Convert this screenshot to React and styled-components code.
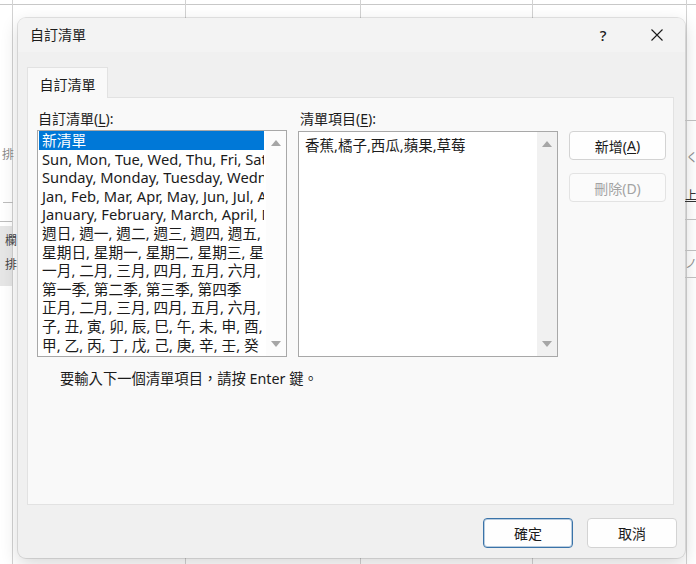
import React from "react";
import styled, { createGlobalStyle } from "styled-components";

const UI_FONT = `"Segoe UI", "Noto Sans", "Noto Sans CJK TC", sans-serif`;

const GlobalStyle = createGlobalStyle`
  html, body {
    margin: 0;
    padding: 0;
  }
  body {
    width: 696px;
    height: 564px;
    overflow: hidden;
    font-family: ${UI_FONT};
    color: #1b1b1b;
  }
`;

// spreadsheet showing behind the dialog
const Sheet = styled.div`
  width: 696px;
  height: 564px;
  display: grid;
  grid-template-columns: 18px 667px 11px;
  grid-template-rows: 18px 540px 6px;
  background-color: #fff;
  background-image:
    linear-gradient(#d2d2d2, #d2d2d2),
    linear-gradient(#d2d2d2, #d2d2d2),
    linear-gradient(#d2d2d2, #d2d2d2),
    linear-gradient(#d2d2d2, #d2d2d2),
    linear-gradient(#d2d2d2, #d2d2d2),
    linear-gradient(#c8c8c8, #c8c8c8);
  background-size: 1px 100%, 1px 100%, 1px 100%, 1px 100%, 1px 100%, 100% 1px;
  background-position: 12px 0, 185px 0, 360px 0, 532px 0, 686px 0, 0 4px;
  background-repeat: no-repeat;
`;

const SideStrip = styled.div`
  grid-row: 2;
  grid-column: ${(p) => p.col};
  display: flex;
  flex-direction: column;
  overflow: hidden;
  font-size: 12px;
  line-height: 14px;
`;

const Gap = styled.div`
  height: ${(p) => p.h}px;
  flex: none;
`;

const Frag = styled.div`
  flex: none;
  padding-left: ${(p) => p.indent || 0}px;
  color: ${(p) => p.color || "#8a8a8a"};
  text-decoration: ${(p) => (p.underline ? "underline" : "none")};
  white-space: nowrap;
`;

const Rule = styled.div`
  flex: none;
  height: 1px;
  margin-left: ${(p) => p.indent || 0}px;
  width: ${(p) => p.w || 11}px;
  background: #bdbdbd;
`;

const GrayBlock = styled.div`
  flex: none;
  height: 60px;
  width: 12px;
  background: #e6e6e6;
  display: flex;
  flex-direction: column;
  gap: 10px;
  padding-top: 8px;
  box-sizing: border-box;
  font-size: 12px;
  line-height: 14px;
  color: #444;
  padding-left: 5px;
`;

const Dialog = styled.div`
  grid-row: 2;
  grid-column: 2;
  display: flex;
  flex-direction: column;
  background: #f0f0f0;
  border-radius: 8px;
  box-shadow: 0 0 0 1px rgba(0, 0, 0, 0.1), 0 6px 18px rgba(0, 0, 0, 0.16);
  overflow: hidden;
`;

const TitleBar = styled.div`
  height: 34px;
  display: flex;
  align-items: center;
  padding-left: 12px;
  background: #f3f3f3;
  flex: none;
`;

const Title = styled.div`
  font-size: 14px;
  line-height: 18px;
`;

const TitleButtons = styled.div`
  margin-left: auto;
  display: flex;
  gap: 8px;
  padding-right: 5px;
`;

const CaptionButton = styled.div`
  width: 46px;
  height: 30px;
  display: flex;
  align-items: center;
  justify-content: center;
  font-size: 15px;
  font-weight: 500;
  color: #1b1b1b;
`;

const TabArea = styled.div`
  padding: 15px 11px 0 9px;
  display: flex;
  flex-direction: column;
`;

const TabStrip = styled.div`
  display: flex;
  height: 30px;
`;

const Tab = styled.div`
  width: 81px;
  box-sizing: border-box;
  background: #f9f9f9;
  border: 1px solid #e2e2e2;
  border-bottom: none;
  margin-bottom: -1px;
  position: relative;
  z-index: 1;
  display: flex;
  align-items: center;
  justify-content: center;
  font-size: 14px;
  padding-top: 1px;
`;

const Panel = styled.div`
  height: 408px;
  box-sizing: border-box;
  background: #f9f9f9;
  border: 1px solid #e2e2e2;
  padding: 12px 0 0 9px;
`;

const Columns = styled.div`
  display: grid;
  grid-template-columns: 250px 260px 97px;
  grid-template-rows: auto 227px;
  column-gap: 11px;
`;

const Label = styled.div`
  font-size: 14px;
  line-height: 18px;
  margin-bottom: 2px;
  padding-left: ${(p) => p.indent || 0}px;
`;

const Key = styled.span`
  text-decoration: underline;
  text-underline-offset: 2px;
`;

const ListBox = styled.div`
  display: flex;
  background: #fff;
  border: 1px solid #a8a8a8;
  margin-top: ${(p) => p.offset || 0}px;
  height: ${(p) => 227 - (p.offset || 0)}px;
  box-sizing: border-box;
  overflow: hidden;
`;

const Items = styled.div`
  flex: 1;
  min-width: 0;
  overflow: hidden;
  padding: 0 2px 0 1px;
`;

const Item = styled.div`
  height: 18.6px;
  line-height: 18.6px;
  font-size: 14.7px;
  padding-left: 3px;
  white-space: nowrap;
  overflow: hidden;
  background: ${(p) => (p.selected ? "#0078d7" : "transparent")};
  color: ${(p) => (p.selected ? "#fff" : "#1b1b1b")};
`;

const Entry = styled.div`
  flex: 1;
  padding: 3px 6px;
  font-size: 14.5px;
  line-height: 20px;
  white-space: nowrap;
`;

const ScrollTrack = styled.div`
  width: 20px;
  flex: none;
  display: flex;
  flex-direction: column;
  justify-content: space-between;
  background: ${(p) => p.bg};
`;

const ArrowBox = styled.div`
  height: 24px;
  display: flex;
  align-items: center;
  justify-content: center;
`;

const ButtonColumn = styled.div`
  display: flex;
  flex-direction: column;
  gap: 13px;
  padding-top: 1px;
`;

const Button = styled.div`
  height: ${(p) => p.h || 29}px;
  width: ${(p) => p.w || 97}px;
  box-sizing: border-box;
  border-radius: 4px;
  display: flex;
  align-items: center;
  justify-content: center;
  font-size: 14px;
  background: ${(p) => (p.disabled ? "#fbfbfb" : "#fefefe")};
  color: ${(p) => (p.disabled ? "#a3a3a3" : "#1b1b1b")};
  border: 1px solid
    ${(p) => (p.primary ? "#3a73a8" : p.disabled ? "#e3e3e3" : "#d3d3d3")};
  box-shadow: ${(p) =>
    p.primary ? "inset 0 0 0 1px rgba(58, 115, 168, 0.35)" : "none"};
`;

const Hint = styled.div`
  margin-top: 13px;
  padding-left: 23px;
  font-size: 14.3px;
  line-height: 18px;
`;

const Footer = styled.div`
  flex: 1;
  display: flex;
  justify-content: flex-end;
  align-items: flex-start;
  gap: 14px;
  padding: 13px 8px 0 0;
`;

const Arrow = ({ down }) => (
  <svg width="10" height="6" viewBox="0 0 10 6">
    <polygon
      points={down ? "0,0 10,0 5,6" : "0,6 10,6 5,0"}
      fill="#a6a6a6"
    />
  </svg>
);

const CloseGlyph = () => (
  <svg width="12" height="12" viewBox="0 0 12 12">
    <path d="M0.5 0.5 L11.5 11.5 M11.5 0.5 L0.5 11.5" stroke="#1b1b1b" strokeWidth="1.1" fill="none" />
  </svg>
);

const presetLists = [
  "新清單",
  "Sun, Mon, Tue, Wed, Thu, Fri, Sat",
  "Sunday, Monday, Tuesday, Wednesday, Thursday, Friday, Saturday",
  "Jan, Feb, Mar, Apr, May, Jun, Jul, Aug, Sep, Oct, Nov, Dec",
  "January, February, March, April, May, June, July",
  "週日, 週一, 週二, 週三, 週四, 週五, 週六",
  "星期日, 星期一, 星期二, 星期三, 星期四, 星期五, 星期六",
  "一月, 二月, 三月, 四月, 五月, 六月, 七月, 八月",
  "第一季, 第二季, 第三季, 第四季",
  "正月, 二月, 三月, 四月, 五月, 六月, 七月, 八月",
  "子, 丑, 寅, 卯, 辰, 巳, 午, 未, 申, 酉, 戌, 亥",
  "甲, 乙, 丙, 丁, 戊, 己, 庚, 辛, 壬, 癸",
];

export default function App() {
  return (
    <>
      <GlobalStyle />
      <Sheet>
        <SideStrip col={1}>
          <Gap h={130} />
          <Frag indent={2}>排</Frag>
          <Gap h={40} />
          <Rule indent={3} w={10} />
          <Gap h={18} />
          <Rule w={12} />
          <Gap h={4} />
          <GrayBlock>
            <span>欄</span>
            <span>排</span>
          </GrayBlock>
        </SideStrip>

        <Dialog>
          <TitleBar>
            <Title>自訂清單</Title>
            <TitleButtons>
              <CaptionButton>?</CaptionButton>
              <CaptionButton>
                <CloseGlyph />
              </CaptionButton>
            </TitleButtons>
          </TitleBar>

          <TabArea>
            <TabStrip>
              <Tab>自訂清單</Tab>
            </TabStrip>
            <Panel>
              <Columns>
                <Label indent={1}>
                  自訂清單(<Key>L</Key>):
                </Label>
                <Label indent={2}>
                  清單項目(<Key>E</Key>):
                </Label>
                <div />

                <ListBox>
                  <Items>
                    {presetLists.map((text, i) => (
                      <Item key={i} selected={i === 0}>
                        {text}
                      </Item>
                    ))}
                  </Items>
                  <ScrollTrack bg="#fcfcfc">
                    <ArrowBox>
                      <Arrow />
                    </ArrowBox>
                    <ArrowBox>
                      <Arrow down />
                    </ArrowBox>
                  </ScrollTrack>
                </ListBox>

                <ListBox offset={1}>
                  <Entry>香蕉,橘子,西瓜,蘋果,草莓</Entry>
                  <ScrollTrack bg="#f1f1f1">
                    <ArrowBox>
                      <Arrow />
                    </ArrowBox>
                    <ArrowBox>
                      <Arrow down />
                    </ArrowBox>
                  </ScrollTrack>
                </ListBox>

                <ButtonColumn>
                  <Button>
                    新增(<Key>A</Key>)
                  </Button>
                  <Button disabled>刪除(D)</Button>
                </ButtonColumn>
              </Columns>
              <Hint>要輸入下一個清單項目，請按 Enter 鍵。</Hint>
            </Panel>
          </TabArea>

          <Footer>
            <Button primary w={90} h={30}>
              確定
            </Button>
            <Button w={90} h={30}>
              取消
            </Button>
          </Footer>
        </Dialog>

        <SideStrip col={3}>
          <Gap h={102} />
          <Rule w={11} />
          <Gap h={30} />
          <Frag indent={1}>く</Frag>
          <Gap h={24} />
          <Frag color="#333" underline>
            上
          </Frag>
          <Gap h={16} />
          <Rule w={11} />
          <Gap h={30} />
          <Rule w={11} />
          <Gap h={6} />
          <Frag>ノ</Frag>
          <Gap h={6} />
          <Rule w={11} />
        </SideStrip>
      </Sheet>
    </>
  );
}
